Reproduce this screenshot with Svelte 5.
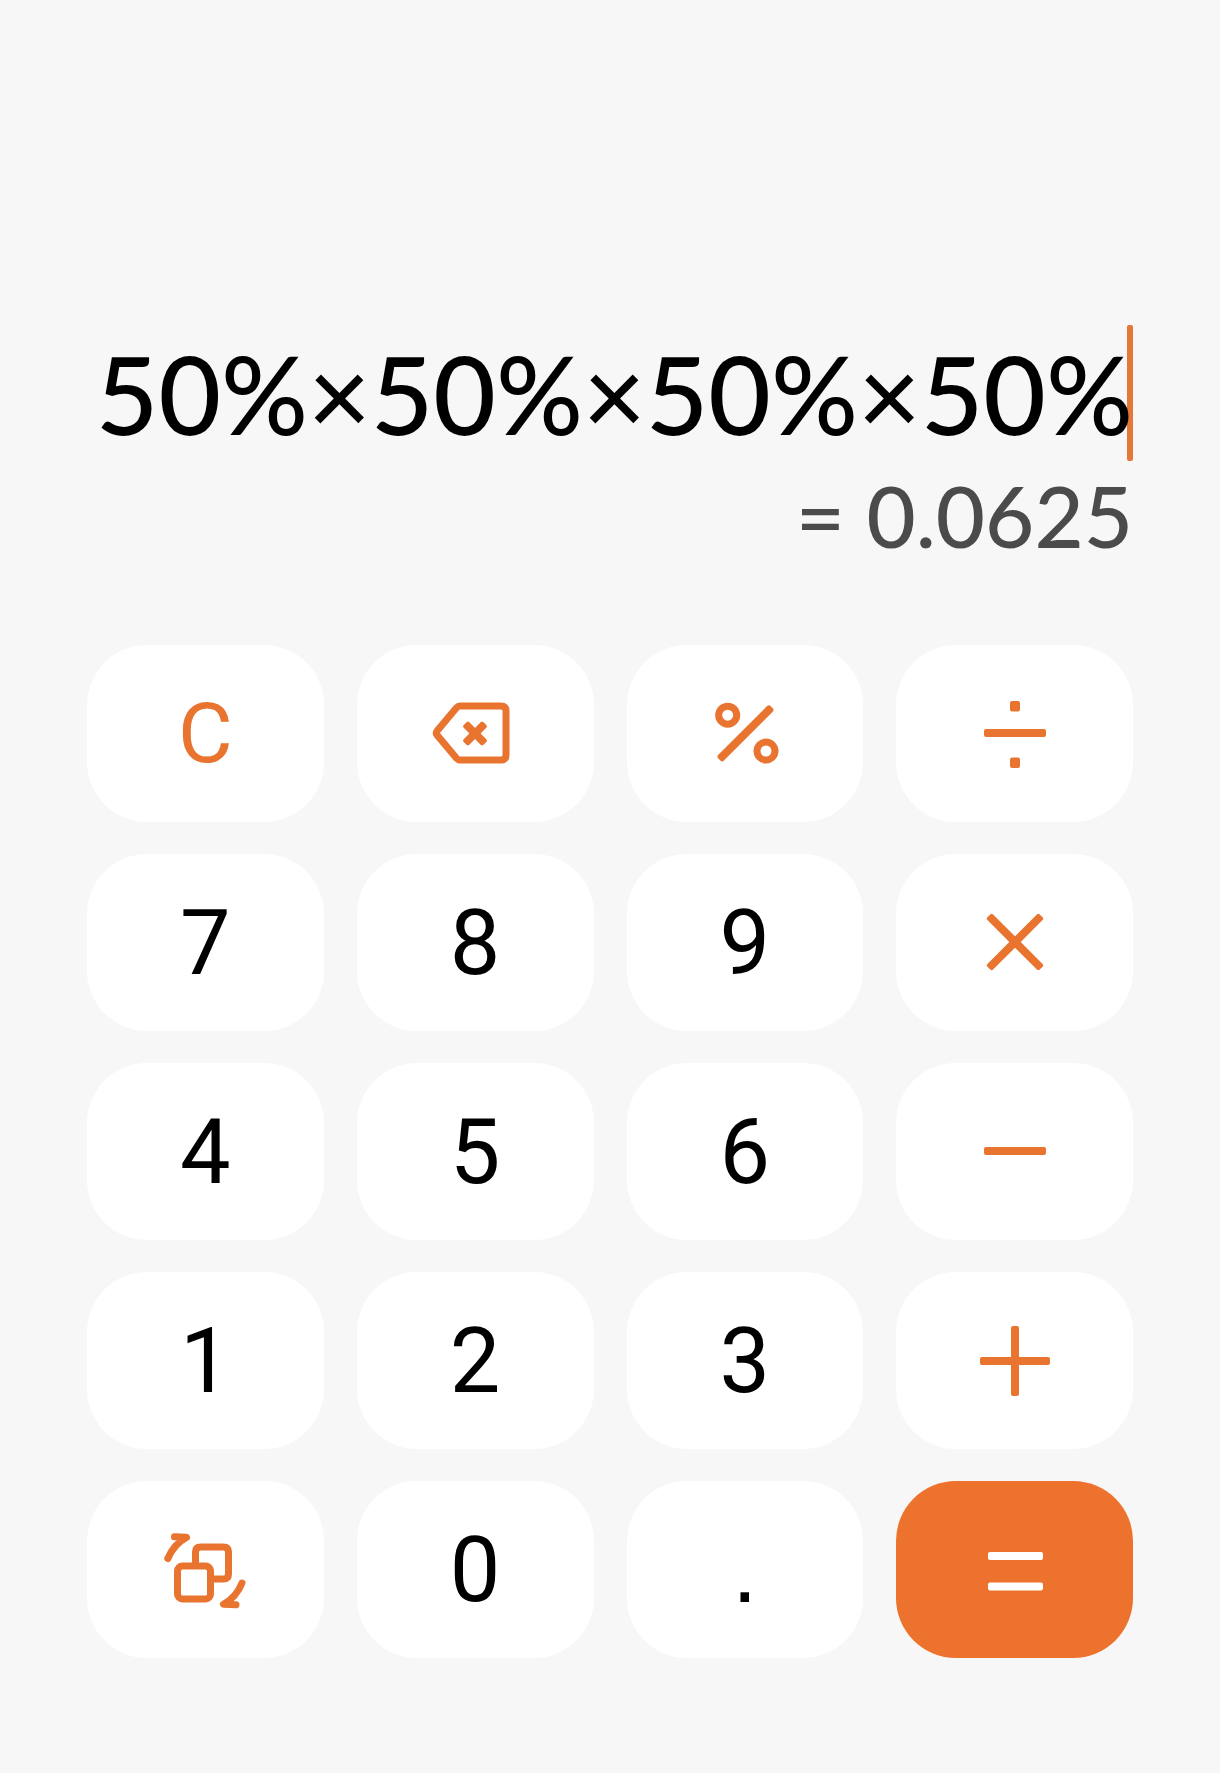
<script lang="ts">
    type Key = {
        id: string,
        label: string,
        icon?: boolean,
        accent?: boolean
    };

    const keys: Key[] = [
        { id: "C", label: "Clear", accent: true },
        { id: "back", label: "Backspace", icon: true },
        { id: "%", label: "Percent", icon: true },
        { id: "÷", label: "Divide", icon: true },
        { id: "7", label: "7" },
        { id: "8", label: "8" },
        { id: "9", label: "9" },
        { id: "×", label: "Multiply", icon: true },
        { id: "4", label: "4" },
        { id: "5", label: "5" },
        { id: "6", label: "6" },
        { id: "-", label: "Minus", icon: true },
        { id: "1", label: "1" },
        { id: "2", label: "2" },
        { id: "3", label: "3" },
        { id: "+", label: "Plus", icon: true },
        { id: "convert", label: "Converter", icon: true },
        { id: "0", label: "0" },
        { id: ".", label: "Decimal point" },
        { id: "=", label: "Equals", icon: true }
    ];

    let expression = $state("50%×50%×50%×50%");
    let result = $derived(calculate(expression));

    function calculate(text: string) {
        const tokens = text.match(/[\d.]+%*|[+\-×÷]/g) ?? [];
        let total = 0;
        let term = 0;
        let op = "+";

        for (const token of tokens) {
            if ("+-×÷".includes(token)) {
                op = token;
                continue;
            }

            const percents = token.split("%").length - 1;
            const value = parseFloat(token) / 100 ** percents;

            if (op === "×") term *= value;
            else if (op === "÷") term /= value;
            else {
                total += term;
                term = op === "-" ? -value : value;
            }
        }

        return String(Number((total + term).toPrecision(10)));
    }

    function press(id: string) {
        if (id === "C") expression = "";
        else if (id === "back") expression = expression.slice(0, -1);
        else if (id === "=") expression = result;
        else if (id !== "convert") expression += id;
    }
</script>

<main>
    <section class="display">
        <div class="entry">
            <span class="cursor"></span>
            <input class="expression" type="text" aria-label="Expression" readonly value={expression} />
        </div>
        <output class="result">= {result}</output>
    </section>

    <section class="keypad">
        {#each keys as key (key.id)}
            <button
                type="button"
                class="key"
                class:digit={!key.icon}
                class:accent={key.accent || key.icon}
                class:point={key.id === "."}
                class:equals={key.id === "="}
                aria-label={key.label}
                onclick={() => press(key.id)}
            >
                {#if key.icon}
                    <svg class="icon" viewBox="0 0 100 100" aria-hidden="true">
                        {#if key.id === "back"}
                            <path class="line" d="M35 22H76Q81 22 81 27V71Q81 76 76 76H35Q33 76 31.500 74.300L12 51Q10.500 49 12 47L31.500 23.700Q33 22 35 22Z" />
                            <g transform="rotate(45 50 49.500)">
                                <rect x="36" y="45.500" width="28" height="8" rx="2" />
                                <rect x="46" y="35.500" width="8" height="28" rx="2" />
                            </g>
                        {:else if key.id === "%"}
                            <circle class="line" cx="32.700" cy="31.200" r="9" />
                            <circle class="line" cx="71" cy="67" r="9" />
                            <rect x="13.500" y="45.300" width="74" height="8" rx="2.500" transform="rotate(-45 50.500 49.300)" />
                        {:else if key.id === "÷"}
                            <rect x="45" y="17" width="10" height="10.500" rx="2" />
                            <rect x="19" y="45" width="62" height="8" rx="2" />
                            <rect x="45" y="73.500" width="10" height="10.500" rx="2" />
                        {:else if key.id === "×"}
                            <g transform="rotate(45 50 49)">
                                <rect x="13" y="45" width="74" height="8" rx="2" />
                                <rect x="46" y="12" width="8" height="74" rx="2" />
                            </g>
                        {:else if key.id === "-"}
                            <rect x="19" y="45" width="62" height="8" rx="2" />
                        {:else if key.id === "+"}
                            <rect x="15" y="46" width="70" height="8" rx="2" />
                            <rect x="46" y="15" width="8" height="70" rx="2" />
                        {:else if key.id === "convert"}
                            <rect class="line" x="22.500" y="46" width="33" height="33" rx="5" />
                            <path class="line" d="M40.500 44V32Q40.500 27 45.500 27H68.500Q73.500 27 73.500 32V54Q73.500 59 68.500 59H57" />
                            <path class="line arrow" d="M12.800 38.500Q19 24 31.500 17.300L19.500 16.800" />
                            <path class="line arrow" d="M87 63Q81.500 77 68.500 84.300L81 84.800" />
                        {:else}
                            <rect x="23" y="32" width="55" height="8" rx="2" />
                            <rect x="23" y="62.500" width="55" height="8" rx="2" />
                        {/if}
                    </svg>
                {:else}
                    {key.id}
                {/if}
            </button>
        {/each}
    </section>
</main>

<style>
    :global(body) {
        margin: 0;
        background: #f7f7f7;
    }

    main {
        box-sizing: border-box;
        min-height: 100vh;
        padding: 87px 87px 115px;
        display: flex;
        flex-direction: column;
        justify-content: flex-end;
        gap: 76px;
        font-family: Roboto, sans-serif;
    }

    .display {
        display: flex;
        flex-direction: column;
        font-family: Lato, sans-serif;
        font-weight: 500;
    }

    .entry {
        position: relative;
        height: 136px;
    }

    .cursor {
        position: absolute;
        top: 0;
        right: 0;
        width: 6px;
        height: 100%;
        border-radius: 2px;
        background: #e57838;
    }

    .expression {
        position: relative;
        box-sizing: border-box;
        width: 100%;
        height: 100%;
        padding: 0;
        border: 0;
        outline: 0;
        background: transparent;
        color: #000;
        font: inherit;
        font-size: 108px;
        text-align: right;
    }

    .result {
        color: #4b4b4b;
        font-size: 85px;
        line-height: 108px;
        text-align: right;
    }

    .keypad {
        display: grid;
        grid-template-columns: repeat(4, 1fr);
        grid-auto-rows: 177px;
        gap: 32px 33px;
    }

    .key {
        display: flex;
        align-items: center;
        justify-content: center;
        padding: 0;
        border: 0;
        border-radius: 60px;
        background: #fff;
        color: #000;
        font: inherit;
        font-size: 90px;
        line-height: 100px;
        cursor: pointer;
    }

    .key:active {
        background: #ececec;
    }

    .digit {
        padding-top: 2px;
    }

    .accent {
        padding-top: 0;
        color: #e9742f;
        font-size: 84px;
    }

    .point {
        font-family: "Liberation Sans", sans-serif;
    }

    .equals,
    .equals:active {
        background: #ed722d;
        color: #fff;
    }

    .icon {
        width: 100px;
        height: 100px;
        fill: currentColor;
    }

    .line {
        fill: none;
        stroke: currentColor;
        stroke-width: 7;
        stroke-linejoin: round;
    }

    .arrow {
        stroke-linecap: round;
    }
</style>
